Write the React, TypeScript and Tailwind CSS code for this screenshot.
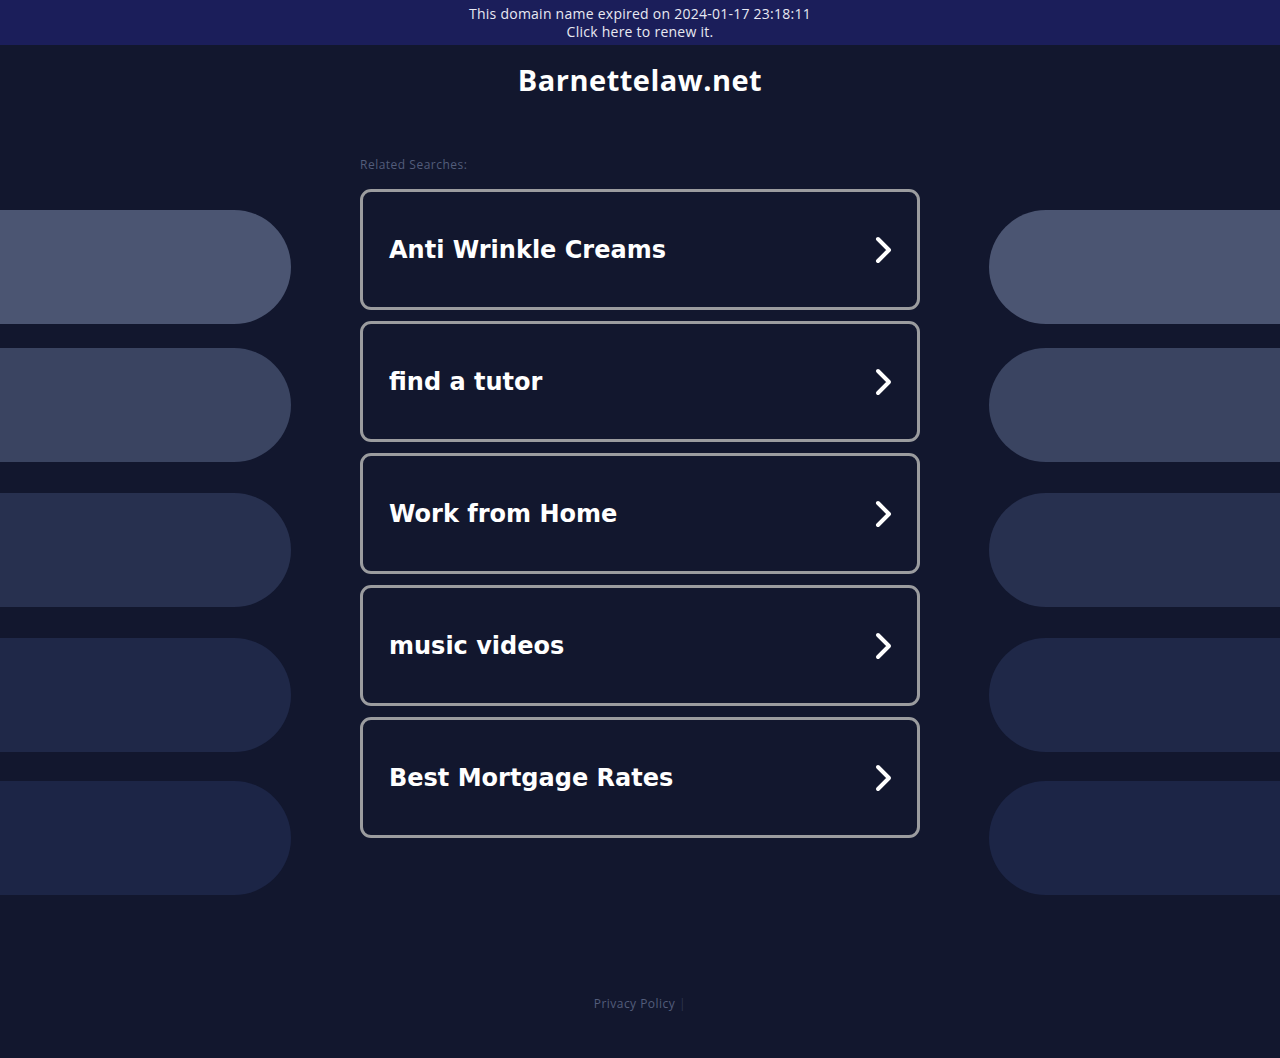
import React from "react";

const items = ["Anti Wrinkle Creams", "find a tutor", "Work from Home", "music videos", "Best Mortgage Rates"];
const pills = [
  { c: "bg-[#4b5572]", mt: "mt-[93px]" },
  { c: "bg-[#3a4461]", mt: "mt-[24px]" },
  { c: "bg-[#27304f]", mt: "mt-[31px]" },
  { c: "bg-[#1f2848]", mt: "mt-[31px]" },
  { c: "bg-[#1c2546]", mt: "mt-[29px]" },
];

function Chevron() {
  return (
    <svg width="22" height="30" viewBox="0 0 22 30" className="shrink-0">
      <path d="M5 4 L16 15 L5 26" fill="none" stroke="#ffffff" strokeWidth="4" strokeLinecap="round" strokeLinejoin="round" />
    </svg>
  );
}

function PillColumn({ side }: { side: "left" | "right" }) {
  return (
    <div className="flex flex-col w-[291px] shrink-0">
      {pills.map((p, i) => (
        <div
          key={i}
          className={`${p.c} ${p.mt} h-[114px] ${side === "left" ? "rounded-r-[57px]" : "rounded-l-[57px]"}`}
        />
      ))}
    </div>
  );
}

export default function App() {
  return (
    <div className="min-h-[1058px] bg-[#12172e] flex flex-col" style={{ fontFamily: '"Open Sans", sans-serif' }}>
      <div className="h-[45px] bg-[#1b1e5a] flex flex-col items-center justify-center text-[14px] leading-[18px] text-[#e8e9f2] font-medium tracking-[0.25px]">
        <div>This domain name expired on 2024-01-17 23:18:11</div>
        <div>Click here to renew it.</div>
      </div>
      <div className="h-[72px] flex items-center justify-center">
        <h1 className="text-[29px] font-bold text-white tracking-[0.5px] pb-[2px]">Barnettelaw.net</h1>
      </div>
      <div className="flex justify-between">
        <PillColumn side="left" />
        <div className="flex flex-col w-[560px] pt-[40px]">
          <div className="text-[12px] leading-[16px] text-[#535d7b] font-medium tracking-[0.5px] mb-[16px]">Related Searches:</div>
          <div className="flex flex-col gap-[11px]">
            {items.map((t) => (
              <div
                key={t}
                className="h-[121px] border-[3px] border-[#9b9c9f] rounded-[11px] flex items-center justify-between pl-[26px] pr-[22px] bg-[#12172e]"
              >
                <span className="text-white text-[24px] font-bold tracking-normal" style={{ fontFamily: '"DejaVu Sans", sans-serif' }}>{t}</span>
                <Chevron />
              </div>
            ))}
          </div>
        </div>
        <PillColumn side="right" />
      </div>
      <div className="flex-1" />
      <div className="flex justify-center items-center text-[12px] leading-[16px] pb-[46px] tracking-[0.45px]">
        <span className="text-[#535d7b]">Privacy Policy</span>
        <span className="text-[#2e3550] ml-[4px]">|</span>
      </div>
    </div>
  );
}
